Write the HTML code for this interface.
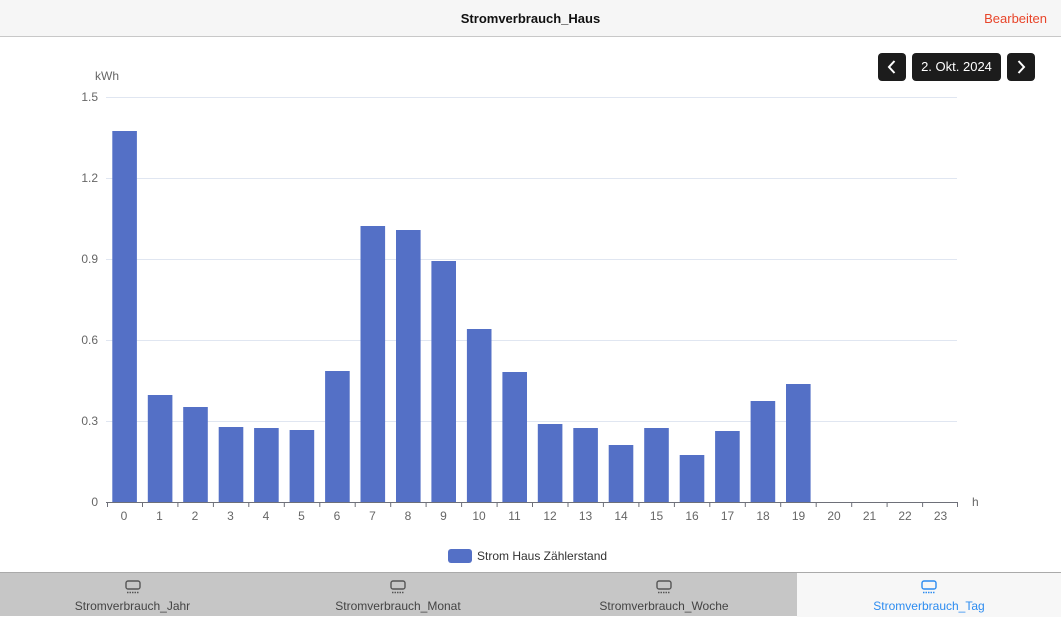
<!DOCTYPE html>
<html><head><meta charset="utf-8"><style>
*{margin:0;padding:0;box-sizing:border-box}
body{width:1061px;height:616px;overflow:hidden;background:#fff;font-family:"Liberation Sans",sans-serif;position:relative}
.hdr{position:absolute;left:0;top:0;width:1061px;height:37px;background:#f6f6f6;border-bottom:1px solid #c8c8c8}
.hdr .t{position:absolute;left:0;width:1061px;top:11px;text-align:center;font-size:13px;font-weight:bold;color:#111}
.hdr .e{position:absolute;right:14px;top:11px;font-size:13px;color:#e8452a}
.btn{position:absolute;top:53px;height:28px;background:#1c1c1c;border-radius:4px;color:#fff;font-size:13px;text-align:center;line-height:28px}
.tabs{position:absolute;left:0;top:572px;width:1061px;height:44px;background:#c6c6c6;border-top:1px solid #aaa}
.tab{position:absolute;top:0;height:44px;text-align:center;font-size:12px;color:#444}
.tab span{position:absolute;left:0;right:0;top:26px}
.tab svg{position:absolute;left:50%;margin-left:-9px;top:6px}
</style></head><body>
<div class="hdr"><div class="t">Stromverbrauch_Haus</div><div class="e">Bearbeiten</div></div>
<div class="btn" style="left:878px;width:28px"><svg width="28" height="28"><path d="M16.5 8 L11 14 L16.5 20" stroke="#fff" stroke-width="2" fill="none"/></svg></div>
<div class="btn" style="left:912px;width:89px">2. Okt. 2024</div>
<div class="btn" style="left:1007px;width:28px"><svg width="28" height="28"><path d="M11.5 8 L17 14 L11.5 20" stroke="#fff" stroke-width="2" fill="none"/></svg></div>
<svg width="1061" height="572" style="position:absolute;left:0;top:0" font-family="Liberation Sans, sans-serif" font-size="12" fill="#666">
<text x="107" y="80" text-anchor="middle" font-size="12">kWh</text>
<g stroke="#e0e6f1" stroke-width="1">
<line x1="106" x2="957" y1="97.5" y2="97.5"/><line x1="106" x2="957" y1="178.5" y2="178.5"/><line x1="106" x2="957" y1="259.5" y2="259.5"/><line x1="106" x2="957" y1="340.5" y2="340.5"/><line x1="106" x2="957" y1="421.5" y2="421.5"/>
</g>
<g text-anchor="end"><text x="98" y="101">1.5</text><text x="98" y="182">1.2</text><text x="98" y="263">0.9</text><text x="98" y="344">0.6</text><text x="98" y="425">0.3</text><text x="98" y="506">0</text></g>
<g fill="#5470c6">
<rect x="112.3" y="131" width="24.6" height="371"/>
<rect x="147.8" y="395" width="24.6" height="107"/>
<rect x="183.2" y="407" width="24.6" height="95"/>
<rect x="218.7" y="427" width="24.6" height="75"/>
<rect x="254.1" y="428" width="24.6" height="74"/>
<rect x="289.6" y="430" width="24.6" height="72"/>
<rect x="325.1" y="371" width="24.6" height="131"/>
<rect x="360.5" y="226" width="24.6" height="276"/>
<rect x="396.0" y="230" width="24.6" height="272"/>
<rect x="431.4" y="261" width="24.6" height="241"/>
<rect x="466.9" y="329" width="24.6" height="173"/>
<rect x="502.4" y="372" width="24.6" height="130"/>
<rect x="537.8" y="424" width="24.6" height="78"/>
<rect x="573.3" y="428" width="24.6" height="74"/>
<rect x="608.7" y="445" width="24.6" height="57"/>
<rect x="644.2" y="428" width="24.6" height="74"/>
<rect x="679.7" y="455" width="24.6" height="47"/>
<rect x="715.1" y="431" width="24.6" height="71"/>
<rect x="750.6" y="401" width="24.6" height="101"/>
<rect x="786.0" y="384" width="24.6" height="118"/>
</g>
<g stroke="#6e7079" stroke-width="1">
<line x1="106" x2="958" y1="502.5" y2="502.5"/>
<path d="M107.5 502v5M142.5 502v5M177.9 502v5M213.4 502v5M248.8 502v5M284.3 502v5M319.8 502v5M355.2 502v5M390.7 502v5M426.1 502v5M461.6 502v5M497.1 502v5M532.5 502v5M568 502v5M603.4 502v5M638.9 502v5M674.4 502v5M709.8 502v5M745.3 502v5M780.7 502v5M816.2 502v5M851.7 502v5M887.1 502v5M922.6 502v5M957.5 502v5"/>
</g>
<g text-anchor="middle">
<text x="124" y="520">0</text><text x="159.5" y="520">1</text><text x="195" y="520">2</text><text x="230.5" y="520">3</text><text x="266" y="520">4</text><text x="301.5" y="520">5</text><text x="337" y="520">6</text><text x="372.5" y="520">7</text><text x="408" y="520">8</text><text x="443.5" y="520">9</text><text x="479" y="520">10</text><text x="514.5" y="520">11</text><text x="550" y="520">12</text><text x="585.5" y="520">13</text><text x="621" y="520">14</text><text x="656.5" y="520">15</text><text x="692" y="520">16</text><text x="727.5" y="520">17</text><text x="763" y="520">18</text><text x="798.5" y="520">19</text><text x="834" y="520">20</text><text x="869.5" y="520">21</text><text x="905" y="520">22</text><text x="940.5" y="520">23</text>
</g>
<text x="972" y="506">h</text>
<rect x="448" y="549" width="24" height="14" rx="3" fill="#5470c6"/>
<text x="477" y="560" fill="#333">Strom Haus Zählerstand</text>
</svg>
<div class="tabs">
<div class="tab" style="left:0;width:265px"><svg width="18" height="16"><rect x="2" y="2" width="14" height="8" rx="2" fill="none" stroke="#555" stroke-width="1.4"/><path d="M3 13.5h12" stroke="#555" stroke-width="1.4" stroke-dasharray="1.5 1"/></svg><span>Stromverbrauch_Jahr</span></div>
<div class="tab" style="left:265px;width:266px"><svg width="18" height="16"><rect x="2" y="2" width="14" height="8" rx="2" fill="none" stroke="#555" stroke-width="1.4"/><path d="M3 13.5h12" stroke="#555" stroke-width="1.4" stroke-dasharray="1.5 1"/></svg><span>Stromverbrauch_Monat</span></div>
<div class="tab" style="left:531px;width:266px"><svg width="18" height="16"><rect x="2" y="2" width="14" height="8" rx="2" fill="none" stroke="#555" stroke-width="1.4"/><path d="M3 13.5h12" stroke="#555" stroke-width="1.4" stroke-dasharray="1.5 1"/></svg><span>Stromverbrauch_Woche</span></div>
<div class="tab" style="left:797px;width:264px;background:#f7f7f7;color:#2d8cf0"><svg width="18" height="16"><rect x="2" y="2" width="14" height="8" rx="2" fill="none" stroke="#2d8cf0" stroke-width="1.4"/><path d="M3 13.5h12" stroke="#2d8cf0" stroke-width="1.4" stroke-dasharray="1.5 1"/></svg><span>Stromverbrauch_Tag</span></div>
</div>
</body></html>
